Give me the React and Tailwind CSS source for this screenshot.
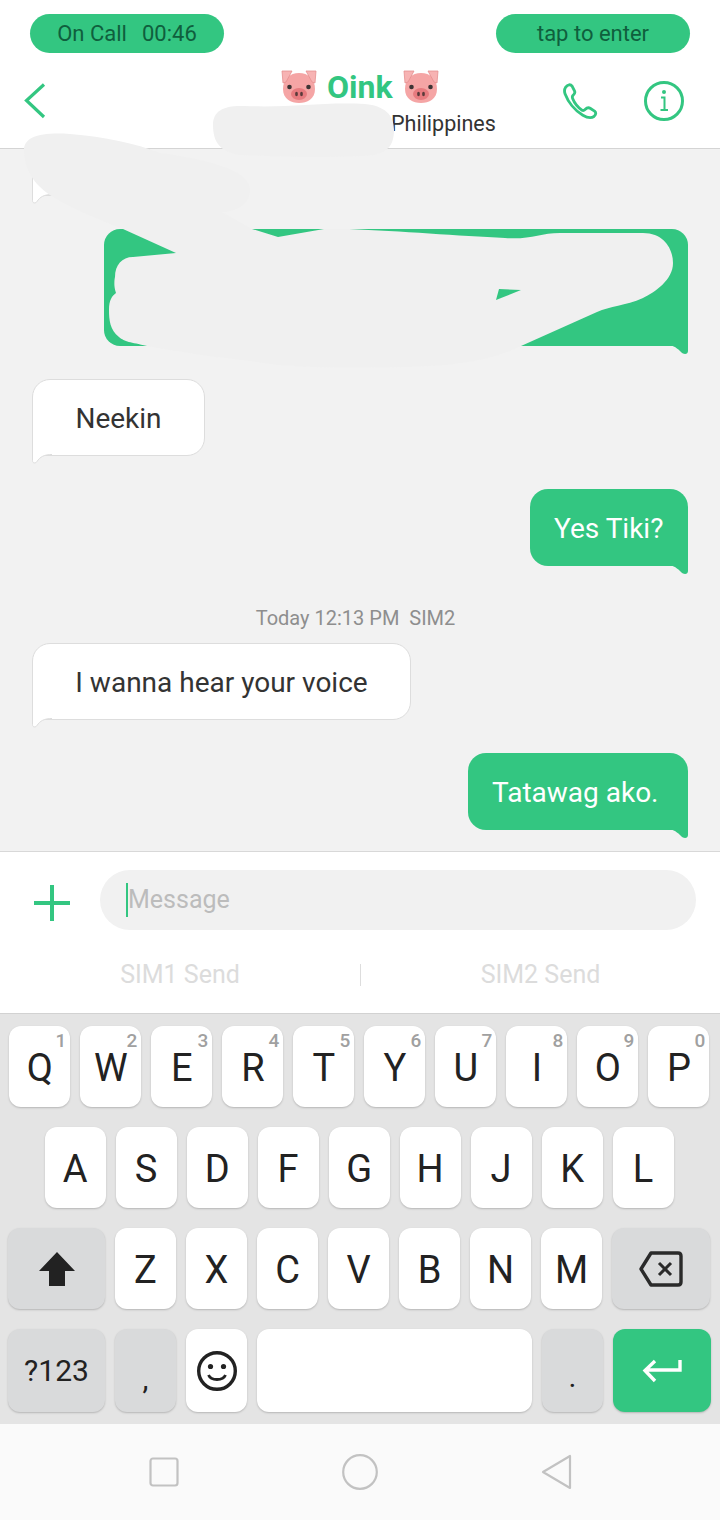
import React from "react";

const font = { fontFamily: '"Roboto", "Liberation Sans", sans-serif' };

function Pig() {
  return (
    <svg width="38" height="34" viewBox="0 0 38 34" className="shrink-0">
      <path d="M19 3 C28 3 35 9 35 19 C35 29 27 33 19 33 C11 33 3 29 3 19 C3 9 10 3 19 3 Z" fill="#f5a5a5" />
      <path d="M2 1 H12 L6 12 L3 13 Z" fill="#f7b3b3" stroke="#e58f8f" strokeWidth="0.8" />
      <path d="M36 1 H26 L32 12 L35 13 Z" fill="#f7b3b3" stroke="#e58f8f" strokeWidth="0.8" />
      <ellipse cx="19" cy="24" rx="8" ry="6" fill="#e77b7f" />
      <ellipse cx="16.5" cy="24" rx="1.4" ry="2.2" fill="#5a3a3a" />
      <ellipse cx="21.5" cy="24" rx="1.4" ry="2.2" fill="#5a3a3a" />
      <circle cx="9.5" cy="17" r="2.3" fill="#3d3535" />
      <circle cx="28.5" cy="17" r="2.3" fill="#3d3535" />
    </svg>
  );
}

function Bubble({ side, className = "", children }) {
  if (side === "left") {
    return (
      <div className={`relative shrink-0 self-start ml-[32px] h-[77px] pt-[2px] flex items-center justify-center bg-white border border-[#dddddd] rounded-[18px] rounded-bl-none text-[28px] text-[#333333] ${className}`}>
        {children}
        <svg width="24" height="12" viewBox="0 0 24 12" className="absolute left-[-1px] bottom-[-10px]" fill="#ffffff" stroke="#dddddd" strokeWidth="1">
          <path d="M0.5 0 V7.5 C0.5 10.5 3.5 10.5 5 8.5 C8 4 12 1.5 20 1.5" />
        </svg>
      </div>
    );
  }
  return (
    <div className={`relative shrink-0 self-end mr-[32px] h-[77px] pl-[24px] pt-[2px] flex items-center bg-[#33c681] rounded-[18px] rounded-br-none text-[28px] text-white ${className}`}>
      {children}
      <svg width="22" height="10" viewBox="0 0 22 10" className="absolute right-0 bottom-[-9px]" fill="#33c681">
        <path d="M0 0 C6 0 10 2 14 6 C17 10 22 10 22 6 V0 Z" />
      </svg>
    </div>
  );
}

function Key({ label, digit }) {
  return (
    <div className="relative w-[61px] h-[81px] rounded-[12px] bg-white shadow-[0_1px_2px_#b5b5b5] flex items-center justify-center text-[38px] text-[#222222]">
      <span className="mt-[4px]">{label}</span>
      {digit && <span className="absolute top-[3px] right-[4px] text-[19px] font-medium leading-[24px] text-[#a0a0a0]">{digit}</span>}
    </div>
  );
}

const row1 = [["Q", "1"], ["W", "2"], ["E", "3"], ["R", "4"], ["T", "5"], ["Y", "6"], ["U", "7"], ["I", "8"], ["O", "9"], ["P", "0"]];

export default function App() {
  return (
    <div style={font} className="relative w-[720px] h-[1520px] overflow-hidden bg-white flex flex-col">
      {/* call pills */}
      <div className="h-[68px] shrink-0 px-[30px] pt-[14px] flex justify-between">
        <div className="w-[194px] h-[39px] rounded-full bg-[#33c681] flex items-center justify-center gap-[15px] text-[22px] text-[#0f5f3d]">
          <span>On Call</span>
          <span>00:46</span>
        </div>
        <div className="w-[194px] h-[39px] rounded-full bg-[#33c681] flex items-center justify-center text-[22px] text-[#0f5f3d]">tap to enter</div>
      </div>

      {/* header */}
      <div className="h-[81px] shrink-0 border-b border-[#d4d4d4] flex items-start pl-[24px]">
        <svg width="22" height="36" viewBox="0 0 22 36" className="mt-[15px] shrink-0" fill="none" stroke="#33c681" strokeWidth="3.2">
          <path d="M20 1.5 L2.5 17.5 L20 34" />
        </svg>
        <div className="w-[414px] shrink-0 pl-[234px]">
          <div className="flex items-center gap-[9px] h-[38px]">
            <Pig />
            <span className="text-[32px] font-bold text-[#33c681] leading-[38px]">Oink</span>
            <Pig />
          </div>
        </div>
        <div className="flex items-center gap-[45px] mt-[13px] ml-[101px]">
          <svg width="38" height="38" viewBox="0 0 24 24" fill="none" stroke="#33c681" strokeWidth="1.8" strokeLinejoin="round" strokeLinecap="round">
            <path d="M3 3.2 C4.2 1.5 6 1.3 7 2.6 L8.6 5.8 C9 6.8 8.6 7.6 7.6 8.4 C7 9 7 9.6 7.4 10.6 C8.6 13.6 10.4 15.8 13.2 17.8 C14 18.2 14.6 18 15.2 17.4 C16.2 16.4 17.4 16 18.4 16.6 L21.2 18.4 C22.4 19.4 22 20.8 20.8 21.8 C19 23 16.6 22.6 13.8 21 C8.6 18 4.4 12.4 2.6 7.6 C2 6 2.2 4.4 3 3.2 Z" />
          </svg>
          <svg width="40" height="40" viewBox="0 0 40 40" fill="none" stroke="#33c681" strokeWidth="3">
            <circle cx="20" cy="20" r="18.5" />
            <circle cx="20" cy="11" r="2" fill="#33c681" stroke="none" />
            <path d="M17 16.5 H20.5 V28.5 M16.5 29 H24" strokeWidth="2" />
          </svg>
        </div>
      </div>

      {/* subtitle sits over the header, partly behind the scribble */}
      <div className="absolute left-[391px] top-[110px] text-[21.5px] leading-[28px] text-[#333333]">Philippines</div>

      {/* conversation */}
      <div className="h-[702px] shrink-0 bg-[#f2f2f2] overflow-hidden flex flex-col justify-end pb-[21px]">
        <Bubble side="left" className="w-[118px]" />
        <div className="shrink-0 self-end mr-[32px] mt-[33px] w-[584px] h-[117px] relative bg-[#33c681] rounded-[16px] rounded-br-none">
          <svg width="22" height="10" viewBox="0 0 22 10" className="absolute right-0 bottom-[-9px]" fill="#33c681">
            <path d="M0 0 C6 0 10 2 14 6 C17 10 22 10 22 6 V0 Z" />
          </svg>
        </div>
        <div className="h-[33px] shrink-0" />
        <Bubble side="left" className="w-[173px]">Neekin</Bubble>
        <div className="h-[33px] shrink-0" />
        <Bubble side="right" className="w-[158px]">Yes Tiki?</Bubble>
        <div className="h-[77px] shrink-0 flex items-end justify-center pb-[11px] text-[20px] leading-[28px] text-[#8e8e8e] whitespace-pre">
          <span className="ml-[-9px]">Today 12:13 PM  SIM2</span>
        </div>
        <Bubble side="left" className="w-[379px]">I wanna hear your voice</Bubble>
        <div className="h-[33px] shrink-0" />
        <Bubble side="right" className="w-[220px]">Tatawag ako.</Bubble>
      </div>

      {/* composer */}
      <div className="h-[162px] shrink-0 border-t border-[#d8d8d8] bg-white">
        <div className="flex pl-[34px] pt-[18px]">
          <svg width="36" height="36" viewBox="0 0 36 36" className="mt-[15px] shrink-0" stroke="#33c681" strokeWidth="4">
            <path d="M18 0 V36 M0 18 H36" />
          </svg>
          <div className="ml-[30px] w-[596px] h-[60px] rounded-full bg-[#f1f1f1] flex items-center pl-[26px]">
            <div className="w-[2px] h-[34px] bg-[#33c681]" />
            <span className="text-[25px] text-[#bcbcbc]">Message</span>
          </div>
        </div>
        <div className="mt-[33px] flex items-center h-[22px] pt-[1px] text-[25px] text-[#dcdcdc]">
          <div className="w-[360px] text-center">SIM1 Send</div>
          <div className="w-px h-[22px] bg-[#dddddd]" />
          <div className="w-[359px] text-center">SIM2 Send</div>
        </div>
      </div>

      {/* keyboard */}
      <div className="h-[411px] shrink-0 bg-[#e4e4e4] border-t border-[#d2d2d2] pt-[12px] flex flex-col gap-[20px]">
        <div className="flex gap-[10px] pl-[9.4px]">
          {row1.map(([l, d]) => <Key key={l} label={l} digit={d} />)}
        </div>
        <div className="flex gap-[10px] pl-[44.6px]">
          {["A", "S", "D", "F", "G", "H", "J", "K", "L"].map((l) => <Key key={l} label={l} />)}
        </div>
        <div className="flex gap-[10px] pl-[8px]">
          <div className="w-[97px] h-[81px] rounded-[12px] bg-[#d9dadb] shadow-[0_1px_2px_#b5b5b5] flex items-center justify-center">
            <svg width="38" height="36" viewBox="0 0 38 36" fill="#222222"><path d="M19 1 L37 20 H27 V35 H11 V20 H1 Z" /></svg>
          </div>
          {["Z", "X", "C", "V", "B", "N", "M"].map((l) => <Key key={l} label={l} />)}
          <div className="w-[98px] h-[81px] rounded-[12px] bg-[#d9dadb] shadow-[0_1px_2px_#b5b5b5] flex items-center justify-center">
            <svg width="44" height="36" viewBox="0 0 44 36" fill="none" stroke="#2a2a2a" strokeWidth="3.4" strokeLinejoin="round">
              <path d="M12 2 H39 Q42 2 42 5 V31 Q42 34 39 34 H12 L2 18 Z" />
              <path d="M20 12 L32 24 M32 12 L20 24" strokeWidth="3" />
            </svg>
          </div>
        </div>
        <div className="flex gap-[10px] pl-[8px]">
          <div className="w-[97px] h-[83px] rounded-[12px] bg-[#d9dadb] shadow-[0_1px_2px_#b5b5b5] flex items-center justify-center text-[30px] text-[#222222]">?123</div>
          <div className="w-[61px] h-[83px] rounded-[12px] bg-[#d9dadb] shadow-[0_1px_2px_#b5b5b5] flex items-end justify-center pb-[18px] text-[30px] leading-[30px] text-[#222222]">,</div>
          <div className="w-[61px] h-[83px] rounded-[12px] bg-white shadow-[0_1px_2px_#b5b5b5] flex items-center justify-center">
            <svg width="42" height="42" viewBox="0 0 42 42" fill="none" stroke="#222222" strokeWidth="3.4">
              <circle cx="21" cy="21" r="18.3" />
              <circle cx="14.5" cy="16.5" r="2.6" fill="#222222" stroke="none" />
              <circle cx="27.5" cy="16.5" r="2.6" fill="#222222" stroke="none" />
              <path d="M12.5 25 C15 31 27 31 29.5 25" strokeWidth="2.8" />
            </svg>
          </div>
          <div className="w-[275px] h-[83px] rounded-[12px] bg-white shadow-[0_1px_2px_#b5b5b5]" />
          <div className="w-[61px] h-[83px] rounded-[12px] bg-[#d9dadb] shadow-[0_1px_2px_#b5b5b5] flex items-end justify-center pb-[20px] text-[30px] leading-[30px] text-[#222222]">.</div>
          <div className="w-[98px] h-[83px] rounded-[12px] bg-[#33c681] shadow-[0_1px_2px_#b5b5b5] flex items-center justify-center">
            <svg width="40" height="24" viewBox="0 0 40 24" fill="none" stroke="#ffffff" strokeWidth="3.4">
              <path d="M38 1 V11 H4 M13 2 L3 11.5 L13 22" />
            </svg>
          </div>
        </div>
      </div>

      {/* nav bar */}
      <div className="flex-1 bg-[#fafafa] flex items-center pl-[149px] gap-[163px]">
        <svg width="30" height="30" viewBox="0 0 30 30" fill="none" stroke="#c2c2c2" strokeWidth="2.2"><rect x="1.5" y="1.5" width="27" height="27" rx="2.5" /></svg>
        <svg width="36" height="36" viewBox="0 0 36 36" fill="none" stroke="#c2c2c2" strokeWidth="2.2"><circle cx="18" cy="18" r="16.8" /></svg>
        <svg width="32" height="36" viewBox="0 0 32 36" fill="none" stroke="#c2c2c2" strokeWidth="2.2" strokeLinejoin="round"><path d="M29 2 V34 L2 18 Z" /></svg>
      </div>

      {/* hand-painted scribbles over private content */}
      <svg width="720" height="400" viewBox="0 0 720 400" className="absolute left-0 top-0 pointer-events-none">
        <path fill="#f0f0f0" d="M213 125 C213 110 225 105 245 106 C290 108 320 102 365 104 C385 106 394 115 394 130 C394 148 385 156 360 156 C320 158 290 157 240 155 C220 152 213 142 213 125 Z" />
        <path fill="#f0f0f0" d="M24 150 C24 137 40 132 70 134 C105 137 135 143 160 153 C210 160 250 170 250 190 C250 205 235 212 222 212 L252 229 L278 237 L324 229 L349 229 C400 231 460 236 505 238 C530 240 540 233 560 233 L643 233 C665 233 673 250 673 263 C673 280 655 292 643 298 C625 306 610 306 597 312 L521 346 C490 362 450 366 404 367 C340 368 290 368 257 362 C220 358 180 352 147 346 C130 342 125 342 119 337 C110 330 109 320 109 310 C109 300 112 296 116 293 C113 285 115 277 115 277 C115 265 122 257 133 257 L176 253 L123 229 C95 218 70 208 50 195 C35 185 24 170 24 150 Z" />
        <path fill="#33c681" d="M499 289 L521 290 L496 300 Z" />
      </svg>
    </div>
  );
}
